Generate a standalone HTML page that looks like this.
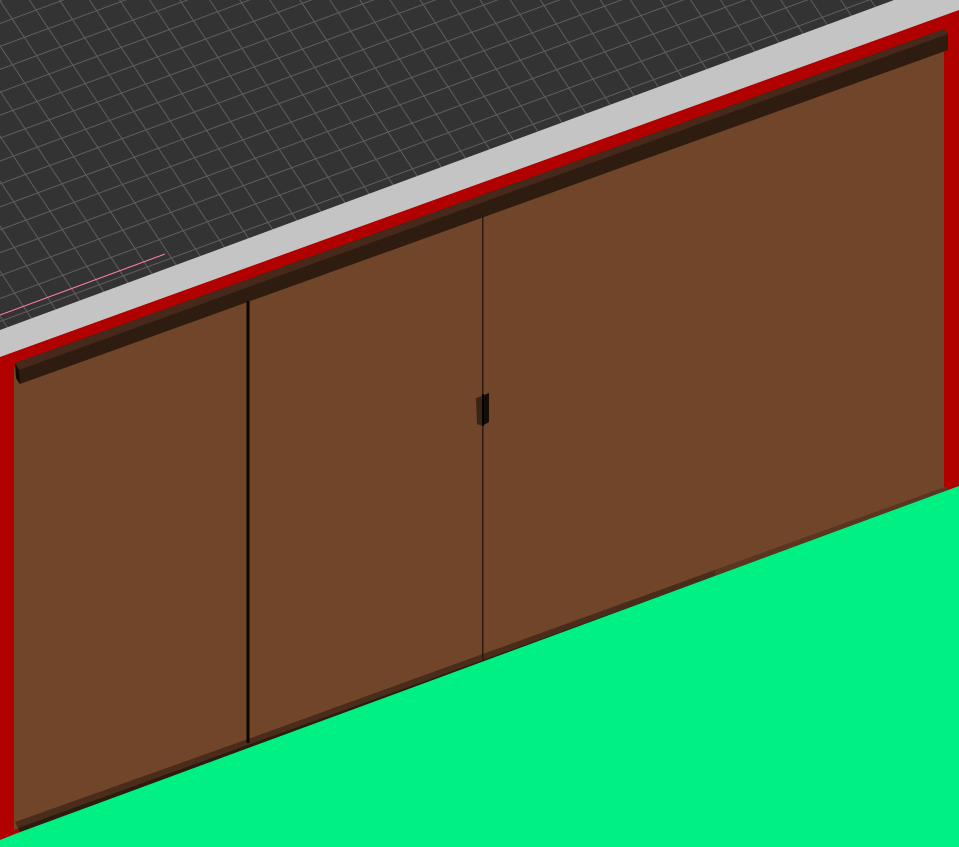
<!DOCTYPE html>
<html><head><meta charset="utf-8"><style>html,body{margin:0;padding:0;background:#343434;overflow:hidden}svg{display:block}</style></head>
<body>
<svg width="959" height="847" viewBox="0 0 959 847" xmlns="http://www.w3.org/2000/svg">
<defs>
<pattern id="ga" width="200" height="21.5" patternUnits="userSpaceOnUse" patternTransform="rotate(-20.3)">
<line x1="0" y1="0.5" x2="200" y2="0.5" stroke="#5e5e5e" stroke-width="1"/>
</pattern>
<pattern id="gb" width="200" height="25" patternUnits="userSpaceOnUse" patternTransform="rotate(56.3)">
<line x1="0" y1="0.5" x2="200" y2="0.5" stroke="#5e5e5e" stroke-width="1"/>
</pattern>
</defs>
<rect width="959" height="847" fill="#333333"/>
<rect width="959" height="847" fill="url(#ga)"/>
<rect width="959" height="847" fill="url(#gb)"/>
<line x1="0" y1="315" x2="165" y2="254" stroke="#ff7fb0" stroke-width="1"/>
<polygon points="0,330 894,0 959,0 959,12 0,365" fill="#c4c4c4"/>
<polygon points="0,357 959,10 959,490 0,847" fill="#b00000"/>
<polygon points="14,368 944,40 944,490 14,830" fill="#704529"/>
<polygon points="15,363 944,29 948,34 948,50 20,384 17,380" fill="#2f1c10"/>
<polygon points="15,363 944,29 948,34 19,370" fill="#46291a"/>
<polygon points="15,363 19,370 20,384 16,378" fill="#120a05"/>
<polygon points="15,822 248,739 715,570 948,486 948,496 20,832" fill="#4a2c1b"/>
<polygon points="715,570 948,486 948,491 715,576" fill="#5a3520"/>
<polygon points="18,828 948,492 948,496 20,832" fill="#2e1b0f"/>
<polygon points="0,847 0,840 15,834 959,486 959,847" fill="#00f084"/>
<rect x="246.5" y="301" width="3" height="442" fill="#0a0604"/>
<rect x="482" y="215" width="1.5" height="445" fill="#2a1a0f"/>
<polygon points="476,398 482,396 482,426 477,424" fill="#3a2415"/>
<polygon points="482,396 489,393 489,422 482,426" fill="#140c06"/>
<rect x="482" y="394" width="2" height="32" fill="#000"/>
</svg>
</body></html>
